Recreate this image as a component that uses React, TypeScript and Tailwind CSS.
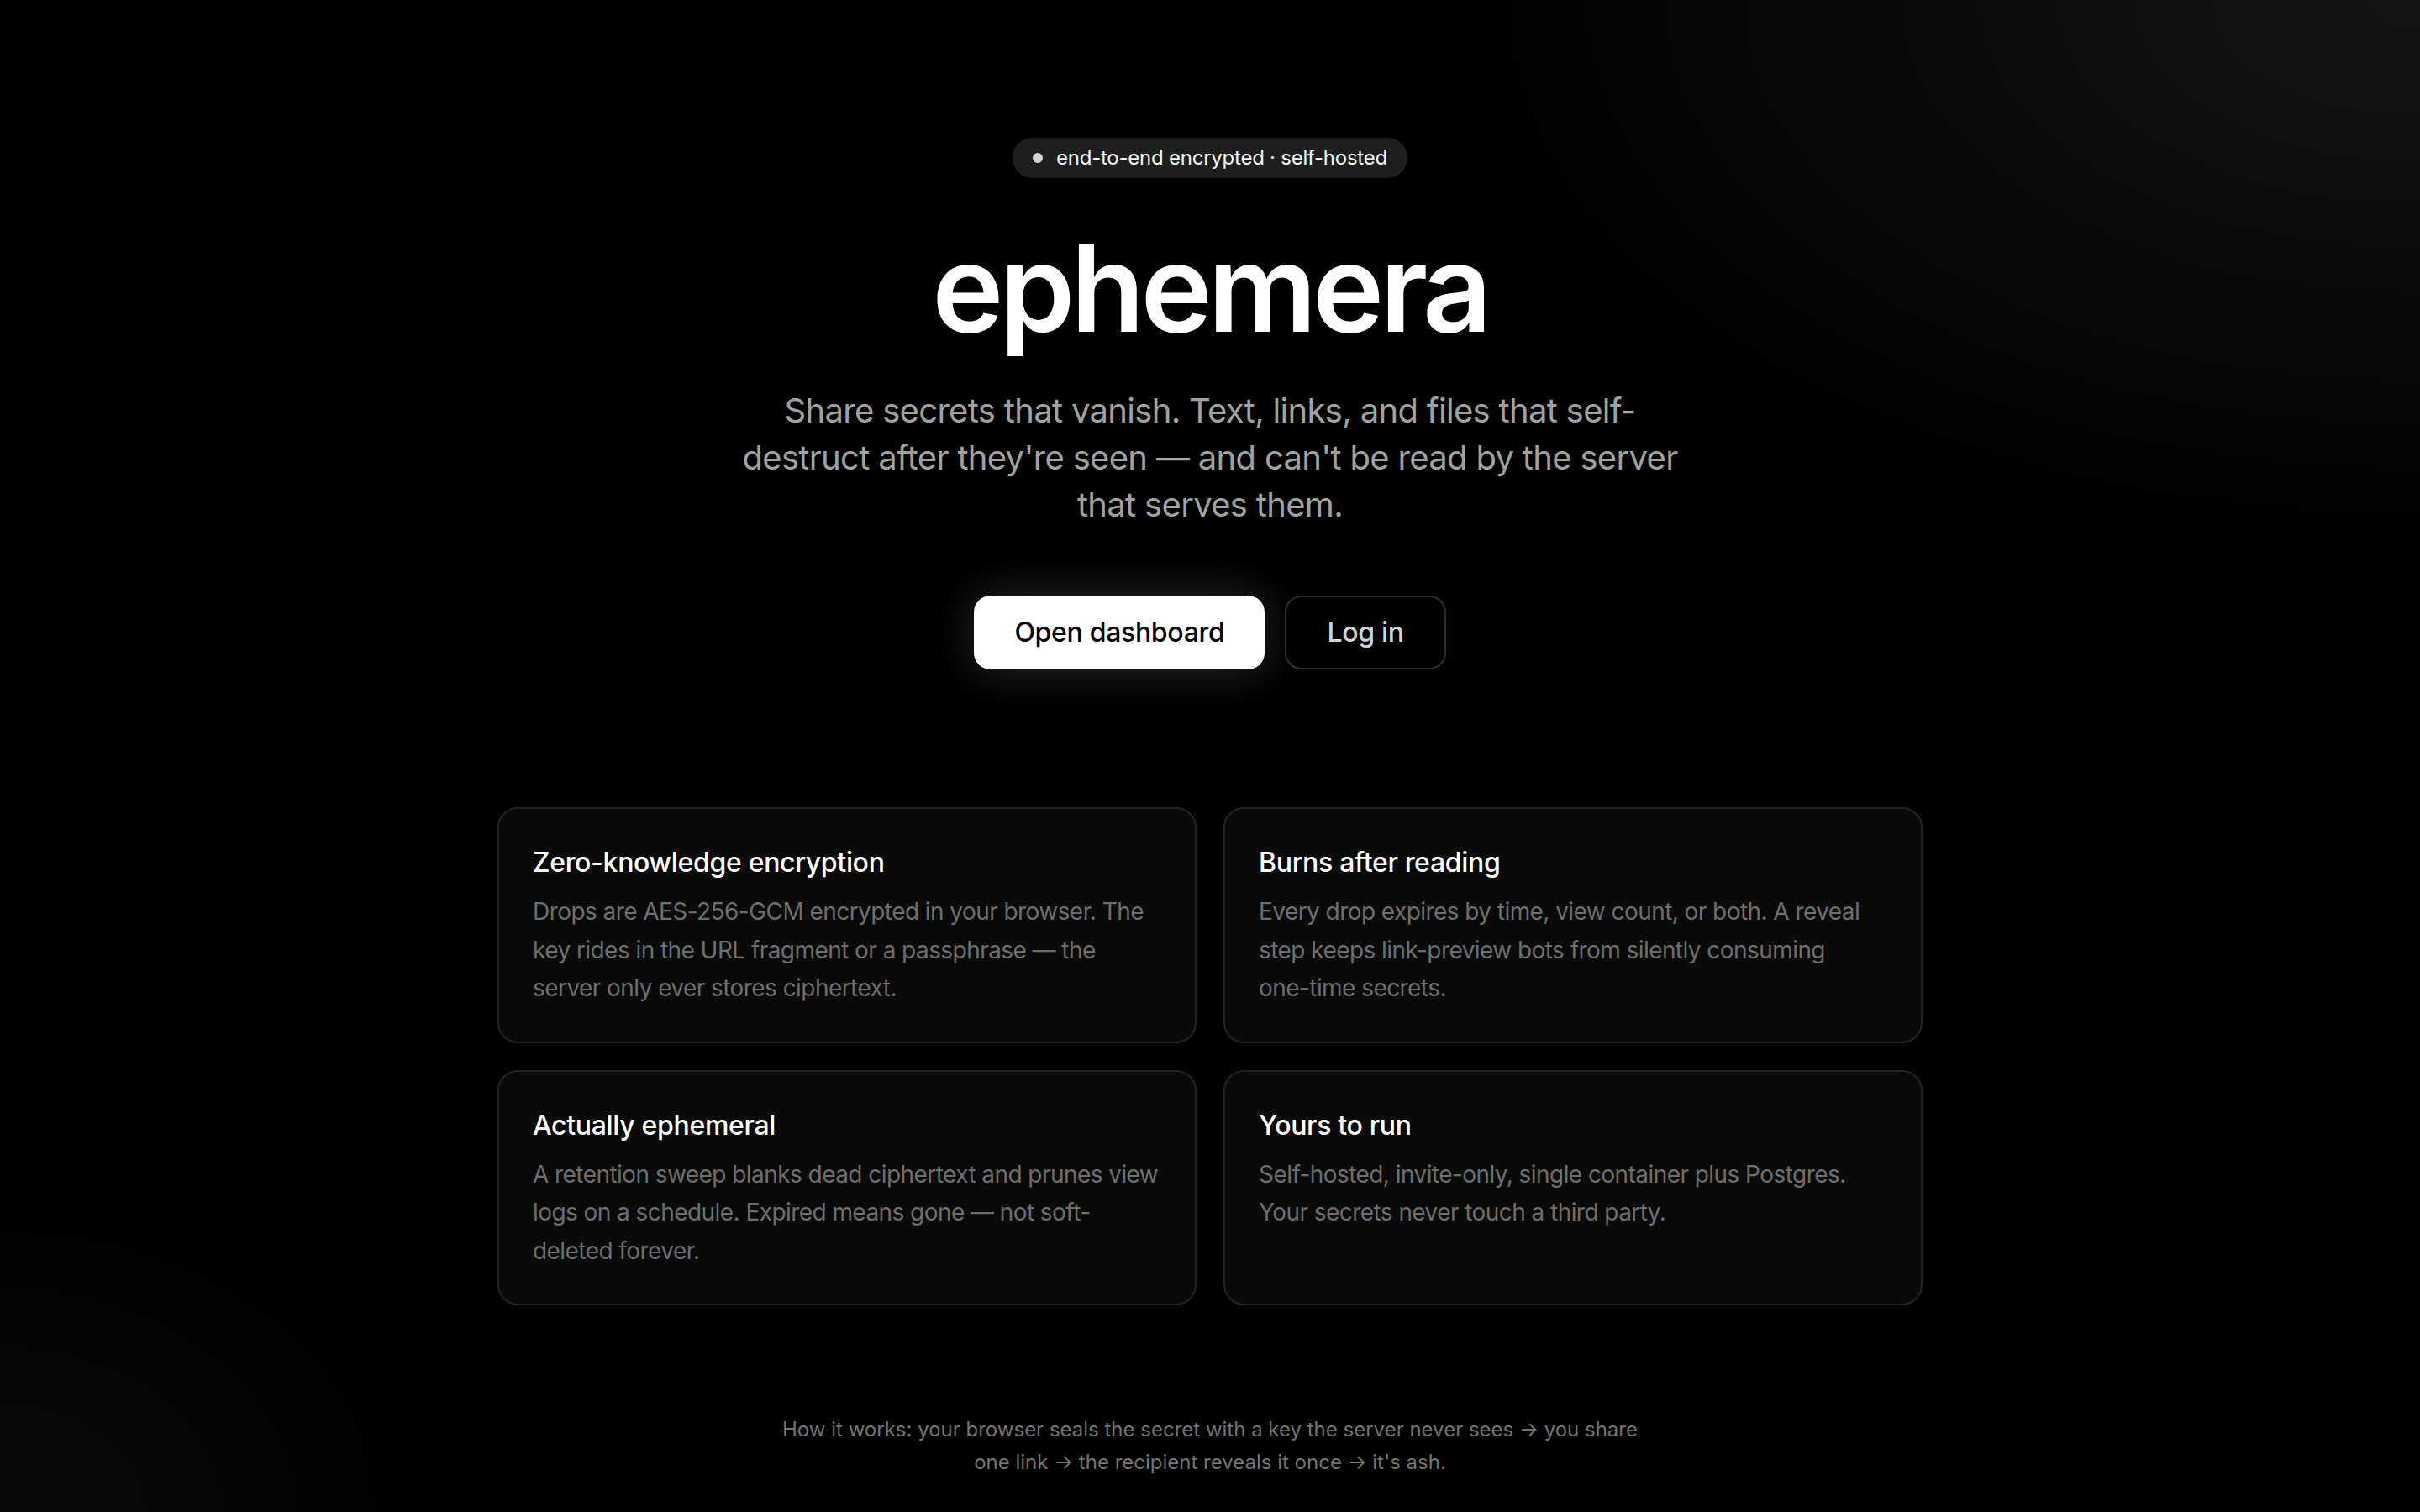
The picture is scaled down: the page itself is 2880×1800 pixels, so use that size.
import React from "react";

const features: { title: string; body: React.ReactNode }[] = [
  {
    title: "Zero-knowledge encryption",
    body: "Drops are AES-256-GCM encrypted in your browser. The key rides in the URL fragment or a passphrase — the server only ever stores ciphertext.",
  },
  {
    title: "Burns after reading",
    body: (
      <>
        Every drop expires by time, view count, or both. A reveal step keeps link-preview bots from silently consuming{" "}
        <span className="whitespace-nowrap">one-time</span> secrets.
      </>
    ),
  },
  {
    title: "Actually ephemeral",
    body: "A retention sweep blanks dead ciphertext and prunes view logs on a schedule. Expired means gone — not soft-deleted forever.",
  },
  {
    title: "Yours to run",
    body: "Self-hosted, invite-only, single container plus Postgres. Your secrets never touch a third party.",
  },
];

export default function App() {
  return (
    <main className="min-h-screen w-full bg-black bg-[radial-gradient(ellipse_1600px_900px_at_100%_0%,#151515,transparent_75%),radial-gradient(ellipse_800px_600px_at_0%_100%,#0a0a0a,transparent_70%)] font-['Inter','Liberation_Sans',sans-serif] text-white antialiased">
      <div className="mx-auto flex max-w-[1792px] flex-col items-center px-12 pt-[164px] pb-10">
        <div className="inline-flex items-center gap-4 rounded-full bg-[#1e1e1e] px-6 py-2 text-[24px] leading-8 tracking-[-0.01em] text-neutral-100">
          <span className="size-3 rounded-full bg-neutral-300" />
          <span>end-to-end encrypted · self-hosted</span>
        </div>

        <h1 className="mt-[59px] text-[144px] leading-none font-semibold tracking-[-0.035em] text-white">
          ephemera
        </h1>

        <p className="mt-[46px] max-w-[1152px] text-center text-[40px] leading-[56px] tracking-[-0.017em] text-neutral-400">
          Share secrets that vanish. Text, links, and files that self-destruct after they're seen — and can't be read by the server that serves them.
        </p>

        <div className="mt-20 flex items-center gap-6">
          <button className="h-[88px] rounded-[20px] bg-white px-12 text-[32px] font-medium tracking-[-0.01em] text-black shadow-[0_0_56px_rgba(255,255,255,0.16)]">
            Open dashboard
          </button>
          <button className="h-[88px] rounded-[20px] border-2 border-[#2e2e2e] bg-black px-12 text-[32px] font-medium tracking-[-0.01em] text-neutral-300">
            Log in
          </button>
        </div>

        <div className="mt-[164px] grid w-full grid-cols-2 gap-8">
          {features.map((f) => (
            <div
              key={f.title}
              className="rounded-3xl border-2 border-[#232323] bg-[#0a0a0a] p-10"
            >
              <h3 className="text-[32px] leading-[48px] font-medium tracking-[-0.01em] text-white">{f.title}</h3>
              <p className="mt-3 text-[28px] leading-[45.5px] tracking-[-0.02em] text-[#6e6e6e]">{f.body}</p>
            </div>
          ))}
        </div>

        <p className="mt-32 max-w-[1024px] text-center text-[24px] leading-[39px] text-neutral-500">
          How it works: your browser seals the secret with a key the server never sees → you share one link → the recipient reveals it once → it's ash.
        </p>
      </div>
    </main>
  );
}
